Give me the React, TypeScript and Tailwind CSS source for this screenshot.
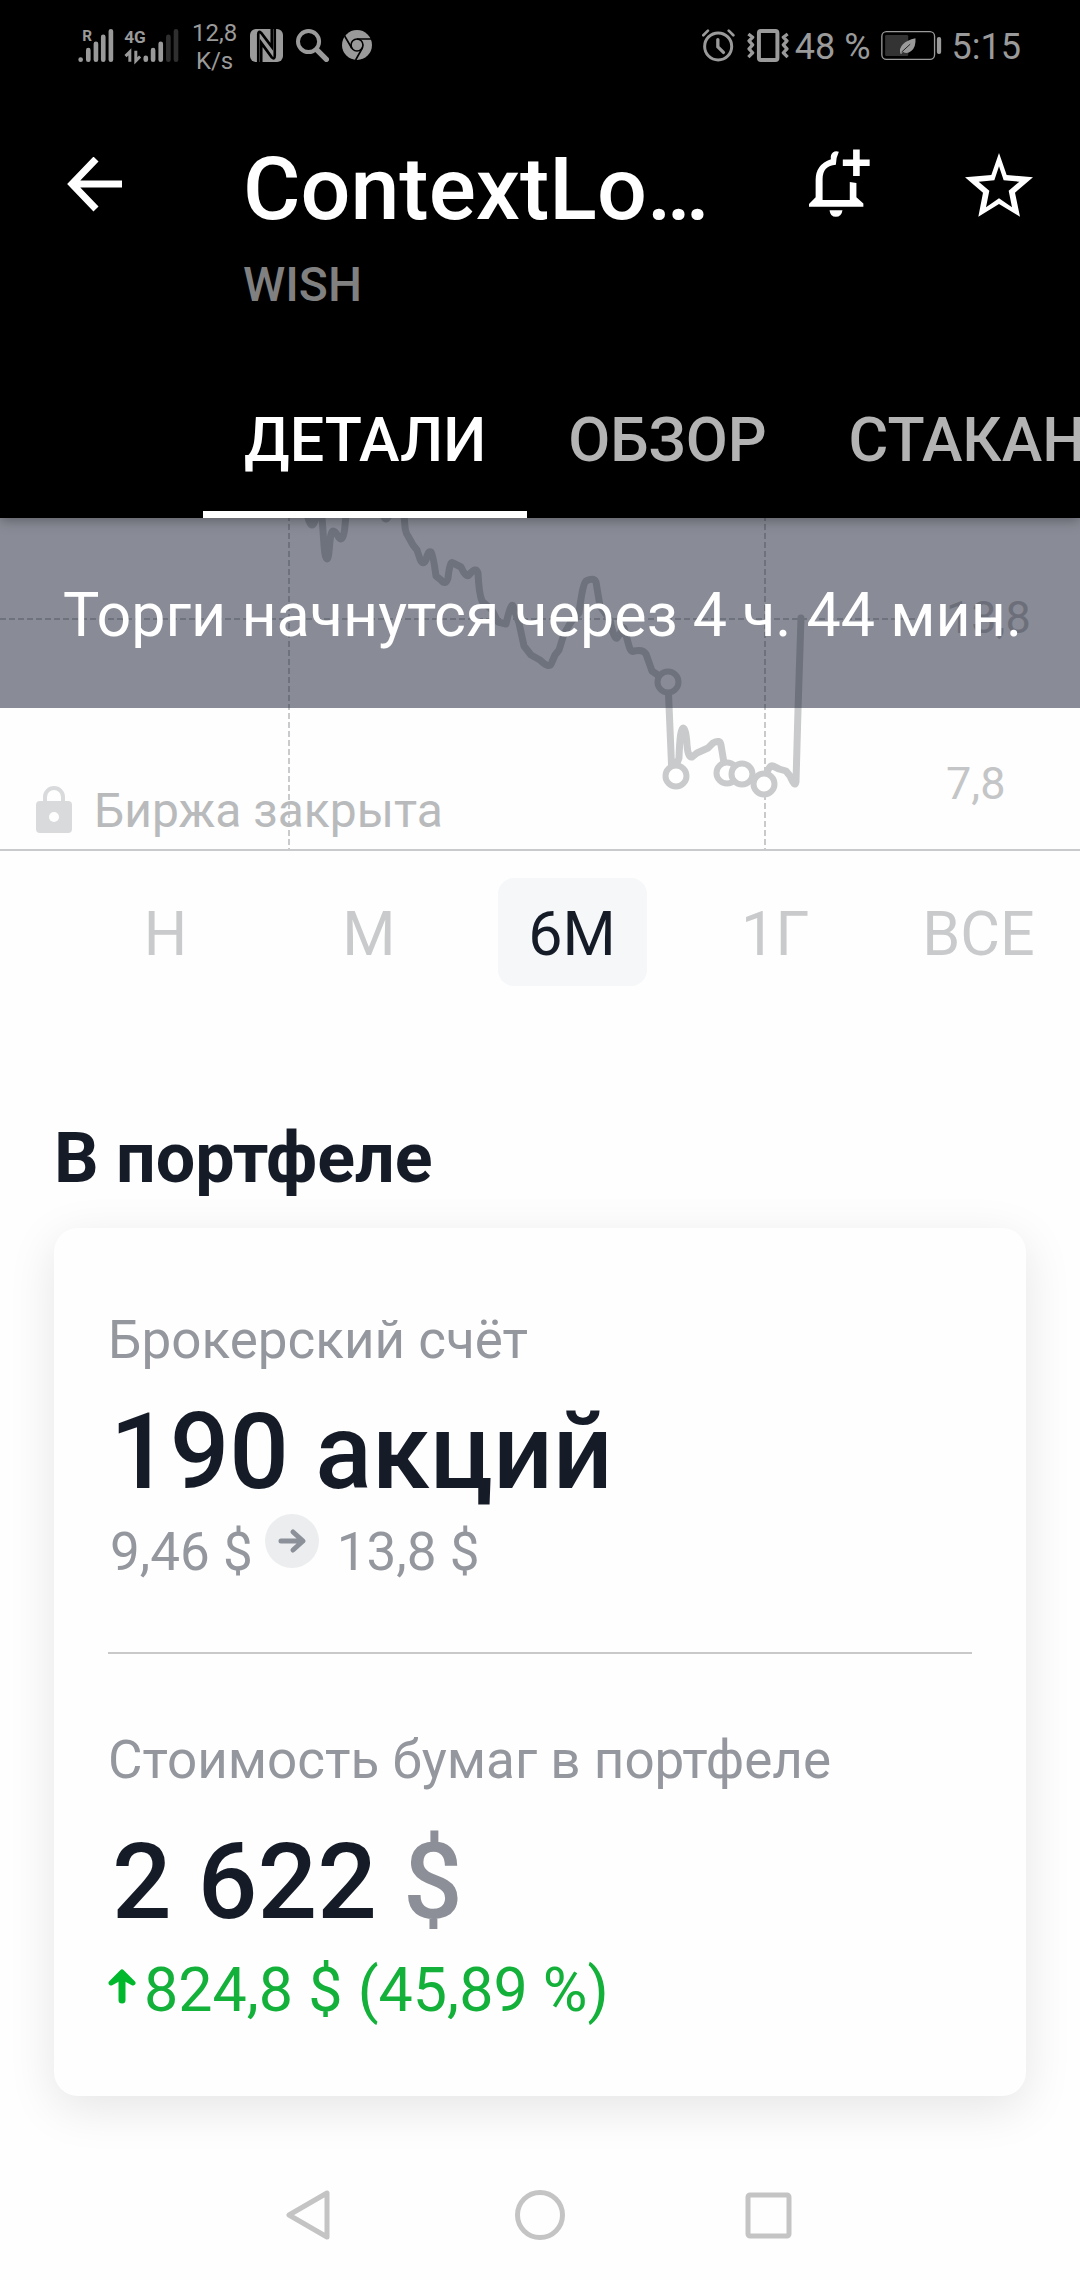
import React, { useState } from 'react';

const TABS = ['ДЕТАЛИ', 'ОБЗОР', 'СТАКАН'];
const RANGES = ['Н', 'М', '6М', '1Г', 'ВСЕ'];

// Trade markers on the price line
const MARKERS = [
  { x: 668, y: 164 },
  { x: 676, y: 258 },
  { x: 727, y: 255 },
  { x: 742, y: 256 },
  { x: 764, y: 266 },
];

const SignalIcon = () => (
  <svg viewBox="50 40 310 125" className="w-[103px] h-[42px]" fill="none" stroke="#9a9a9a" strokeWidth="14" strokeLinecap="round">
    <path d="M61 146v1M84 118v29M107 99v48M129 78v69M152 61v86" />
    <path d="M257 141v6M279 118v29M302 99v48" />
    <path d="M325 78v69M348 61v86" stroke="#2f2f2f" />
    <path d="M196 136l13-13v30M227 120v30l13-13" strokeWidth="9" strokeLinecap="butt" />
    <g fill="#9a9a9a" stroke="none" fontWeight="700" className="font-[Roboto,sans-serif]">
      <text x="66" y="89" fontSize="46">R</text>
      <text x="192" y="97" fontSize="52">4G</text>
    </g>
  </svg>
);

const NfcIcon = () => (
  <svg viewBox="0 0 100 100" className="w-[33px] h-[33px]">
    <rect width="100" height="100" rx="18" fill="#9a9a9a" />
    <path d="M25 100V16Q25 4 34 12L66 54V0" fill="none" stroke="#000" strokeWidth="8" />
    <path d="M34 100V42L66 86Q75 94 75 80V0" fill="none" stroke="#000" strokeWidth="8" />
  </svg>
);

const SearchIcon = () => (
  <svg viewBox="0 0 100 100" className="w-[33px] h-[33px]" fill="none" stroke="#9a9a9a">
    <circle cx="38" cy="38" r="32" strokeWidth="12" />
    <path d="M64 64L92 92" strokeWidth="16" strokeLinecap="round" />
  </svg>
);

const ChromeIcon = () => (
  <svg viewBox="0 0 90 90" className="w-[30px] h-[30px]">
    <circle cx="45" cy="45" r="45" fill="#9a9a9a" />
    <circle cx="45" cy="45" r="18" fill="none" stroke="#000" strokeWidth="5" />
    <path d="M45 27h42M29 54L8 18M61 54L41 90" stroke="#000" strokeWidth="5" />
  </svg>
);

const AlarmIcon = () => (
  <svg viewBox="0 0 100 100" className="w-[33px] h-[33px]" fill="none" stroke="#9a9a9a" strokeLinecap="round">
    <circle cx="49" cy="53" r="41" strokeWidth="9" />
    <path d="M48 32v22l17 17" strokeWidth="10" />
    <path d="M4 19L18 5M95 19L81 5" strokeWidth="8" />
  </svg>
);

const VibrateIcon = () => (
  <svg viewBox="0 0 127 100" className="w-[42px] h-[33px]" fill="none" stroke="#9a9a9a">
    <rect x="36" y="6" width="56" height="88" rx="6" strokeWidth="12" />
    <path d="M4 15l13 10-11 11 11 12-11 12 11 12-13 13M123 15l-13 10 11 11-11 12 11 12-11 12 13 13" strokeWidth="10" strokeLinejoin="round" />
  </svg>
);

const BatteryIcon = () => (
  <svg viewBox="0 0 184 88" className="w-[61px] h-[29px]">
    <rect x="2" y="2" width="160" height="84" rx="14" fill="none" stroke="#9a9a9a" strokeWidth="4" />
    <rect x="12" y="12" width="70" height="64" rx="4" fill="#333" />
    <path d="M58 68Q54 52 66 40T104 22Q106 48 92 60T66 63L61 70Z" fill="#9a9a9a" />
    <path d="M62 64L88 40" stroke="#222" strokeWidth="3" />
    <rect x="169" y="18" width="13" height="52" rx="6" fill="#9a9a9a" />
  </svg>
);

const StatusBar = () => (
  <div className="flex items-center justify-between h-[90px] pl-[77px] pr-[59px] text-[#9a9a9a]">
    <div className="flex items-center">
      <SignalIcon />
      <div className="ml-3 mt-1 text-2xl leading-7 text-center">
        <div>12,8</div>
        <div>K/s</div>
      </div>
      <div className="flex items-center gap-[13px] ml-[13px]">
        <NfcIcon />
        <SearchIcon />
        <ChromeIcon />
      </div>
    </div>
    <div className="flex items-center text-4xl">
      <AlarmIcon />
      <span className="ml-3"><VibrateIcon /></span>
      <span className="ml-1.5 pt-[3px]">48 %</span>
      <span className="mx-2.5"><BatteryIcon /></span>
      <span className="pt-[3px]">5:15</span>
    </div>
  </div>
);

const PriceChart = () => (
  <svg viewBox="0 0 1080 331" className="absolute inset-0 w-full h-full" fill="none">
    <g stroke="#c9cacb" strokeWidth="2" strokeDasharray="6 3">
      <path d="M289 -3V332M765 -3V332" />
      <path d="M0 101H928" />
    </g>
    <path
      d="M306 -10Q309 7 312 7T318 -10L322 0C324 22 324 41 327 41S329 13 333 13S338 21 341 21S345 10 346 -4M382 -6Q386 8 390 -6M404 -4C405 10 405 14 408 18L413 27L417 32L420 41Q423 48 426 42Q428 32 431 34Q433 36 436 58L441 62Q446 68 448 60Q450 42 453 45L461 49Q466 60 469 57Q476 48 478 55Q479 76 482 83L492 92L498 104L506 106Q511 84 513 88L519 105L524 128L531 137L540 142Q550 152 552 144L555 137L559 132L564 116L571 104L579 95Q583 64 586 63Q594 59 596 64L600 88L610 102Q614 122 617 120L624 110L629 128Q631 135 634 133Q643 131 646 136L652 153L668 164L672 258L679 240Q680 210 683 210Q686 210 687 227Q688 240 692 239L697 235L708 230L713 225Q720 221 721 227L724 245L727 255L742 256L764 266Q768 246 773 248L779 251L786 253L790 258Q795 270 796 264L798 192L801 100"
      stroke="#c9cacb"
      strokeWidth="7"
      strokeLinecap="round"
      strokeLinejoin="round"
    />
    {MARKERS.map((m) => (
      <circle key={m.x} cx={m.x} cy={m.y} r="10.5" fill="#fff" stroke="#c9cacb" strokeWidth="6" />
    ))}
    <g fill="#c4c5c6" className="text-[45px]">
      <text x="946" y="115">13,8</text>
      <text x="946" y="281">7,8</text>
    </g>
  </svg>
);

export default function App() {
  const [tab, setTab] = useState('ДЕТАЛИ');
  const [range, setRange] = useState('6М');

  return (
    <div className="min-h-screen bg-[#fefefe] overflow-hidden font-[Roboto,'Noto_Sans',sans-serif] text-[#151c28]">
      <header className="relative z-10 bg-black text-white shadow-[0_2px_12px_rgba(0,0,0,0.35)]">
        <StatusBar />

        <div className="flex items-start pt-[47px]">
          <button aria-label="Назад" className="w-[243px] pl-[67px] pt-5">
            <svg viewBox="0 0 56 56" className="w-14 h-14" fill="none" stroke="#fff" strokeWidth="7">
              <path d="M55 27H6M29 2L5 27L29 52" />
            </svg>
          </button>
          <div className="flex-1">
            <h1 className="text-[88px] leading-[104px] font-medium">ContextLo…</h1>
            <div className="mt-3 text-5xl leading-[64px] font-medium text-[#808080]">WISH</div>
          </div>
          <button aria-label="Добавить уведомление" className="pt-3">
            <svg viewBox="0 0 184 204" className="w-[61px] h-[68px]" fill="#fff">
              <path d="M101 1h20v30h30v20h-30v30h-20V51H70V31h31z" transform="translate(32)" />
              <path d="M90 8Q80 4 72 10T66 30Q20 46 20 92V145L0 165V174H164V164L143 145V102L123 99V153H41V90Q41 50 81 47Q82 24 90 8Z" />
              <path d="M62 184h39q-3 20-20 20t-19-20z" />
            </svg>
          </button>
          <button aria-label="В избранное" className="ml-[95px] mr-[47px] pt-4">
            <svg viewBox="0 0 204 192" className="w-[68px] h-16" fill="#fff" fillRule="evenodd">
              <path d="M102 0L125 66L204 73L150 119L165 191L102 153L40 191L54 119L0 73L79 66ZM102 40L88 82L41 86L73 113L63 163L102 136L141 163L131 113L163 86L116 82Z" />
            </svg>
          </button>
        </div>

        <nav className="flex mt-[55px] pl-[203px] overflow-hidden">
          {TABS.map((name) => (
            <button
              key={name}
              onClick={() => setTab(name)}
              className={`shrink-0 px-[41px] pt-8 pb-[35px] border-b-[7px] text-[61px] leading-[72px] font-medium ${
                tab === name ? 'border-white text-white' : 'border-transparent text-[#b3b3b3]'
              }`}
            >
              {name}
            </button>
          ))}
        </nav>
      </header>

      <section className="relative border-b-2 border-[#c9cacb]">
        <PriceChart />
        <div className="relative flex items-center h-[190px] px-[63px] pt-1.5 bg-[#13192d]/50 text-white text-[61px] whitespace-nowrap">
          Торги начнутся через 4 ч. 44 мин.
        </div>
        <div className="relative flex items-end h-[141px] pl-9 pb-2 text-[#b9babc]">
          <svg viewBox="0 0 36 48" className="w-9 h-12 mb-2">
            <path d="M9 18V12a9 9 0 0118 0v6" fill="none" stroke="#d9dadb" strokeWidth="4" />
            <rect y="16" width="36" height="32" rx="4" fill="#d9dadb" />
            <circle cx="18" cy="32" r="5" fill="#fefefe" />
          </svg>
          <span className="ml-[22px] text-5xl leading-[60px]">Биржа закрыта</span>
        </div>
      </section>

      <div className="flex pt-[27px] pl-16">
        {RANGES.map((name) => (
          <div key={name} className="flex flex-1 justify-center">
            <button
              onClick={() => setRange(name)}
              className={`w-[149px] h-[108px] pt-1.5 rounded-2xl text-[61px] ${
                range === name ? 'bg-[#f5f7f8] text-[#151c28]' : 'text-[#c9cacb]'
              }`}
            >
              {name}
            </button>
          </div>
        ))}
      </div>

      <main className="px-[54px]">
        <h2 className="mt-[132px] text-[70px] leading-[80px] font-bold">В портфеле</h2>

        <div className="mt-[30px] px-[54px] pt-20 pb-[70px] rounded-3xl bg-[#fefefe] shadow-[0_12px_48px_rgba(0,0,0,0.1)]">
          <div className="text-[53px] leading-[64px] text-[#94979e]">Брокерский счёт</div>
          <div className="mt-5 pl-0.5 text-[105px] leading-[122px] font-medium">190 акций</div>
          <div className="flex items-end h-[70px] pl-0.5 text-[53px] leading-[64px] text-[#94979e]">
            <span>9,46 $</span>
            <span className="self-start ml-3 mr-[18px] rounded-full bg-[#ebedee]">
              <svg viewBox="0 0 54 54" className="w-[54px] h-[54px]" fill="none" stroke="#8c9099" strokeWidth="5" strokeLinecap="round" strokeLinejoin="round">
                <path d="M16 27h21M28 18l10 9-10 9" />
              </svg>
            </span>
            <span>13,8 $</span>
          </div>

          <hr className="mt-[68px] border-t-2 border-[#c9c9c9]" />

          <div className="mt-[74px] text-[53px] leading-[64px] text-[#94979e]">Стоимость бумаг в портфеле</div>
          <div className="mt-[30px] pl-1 text-[105px] leading-[122px] font-medium">
            2 622 <span className="text-[#8c8f98]">$</span>
          </div>
          <div className="flex mt-2.5 text-[61px] leading-[72px] text-[#13b03a]">
            <svg viewBox="0 0 28 36" className="w-7 h-9 mt-[14px] mr-2" stroke="#00b82c" strokeLinejoin="round" strokeLinecap="round">
              <path d="M14 32V10" fill="none" strokeWidth="7" />
              <path d="M3 15L14 4L25 15L14 9Z" fill="#00b82c" strokeWidth="5" />
            </svg>
            824,8 $ (45,89 %)
          </div>
        </div>
      </main>

      <nav className="flex items-center justify-center gap-[180px] h-[110px] mt-16">
        <button aria-label="Назад">
          <svg viewBox="0 0 50 50" className="w-[50px] h-[50px]" fill="none" stroke="#c4c4c4" strokeWidth="5" strokeLinejoin="round">
            <path d="M42 3V47L4 25Z" />
          </svg>
        </button>
        <button aria-label="Домой">
          <svg viewBox="0 0 50 50" className="w-[50px] h-[50px]" fill="none" stroke="#c4c4c4" strokeWidth="5">
            <circle cx="25" cy="25" r="22.5" />
          </svg>
        </button>
        <button aria-label="Недавние">
          <svg viewBox="0 0 50 50" className="w-[50px] h-[50px]" fill="none" stroke="#c4c4c4" strokeWidth="5">
            <rect x="3" y="5" width="41" height="41" rx="2" />
          </svg>
        </button>
      </nav>
    </div>
  );
}
